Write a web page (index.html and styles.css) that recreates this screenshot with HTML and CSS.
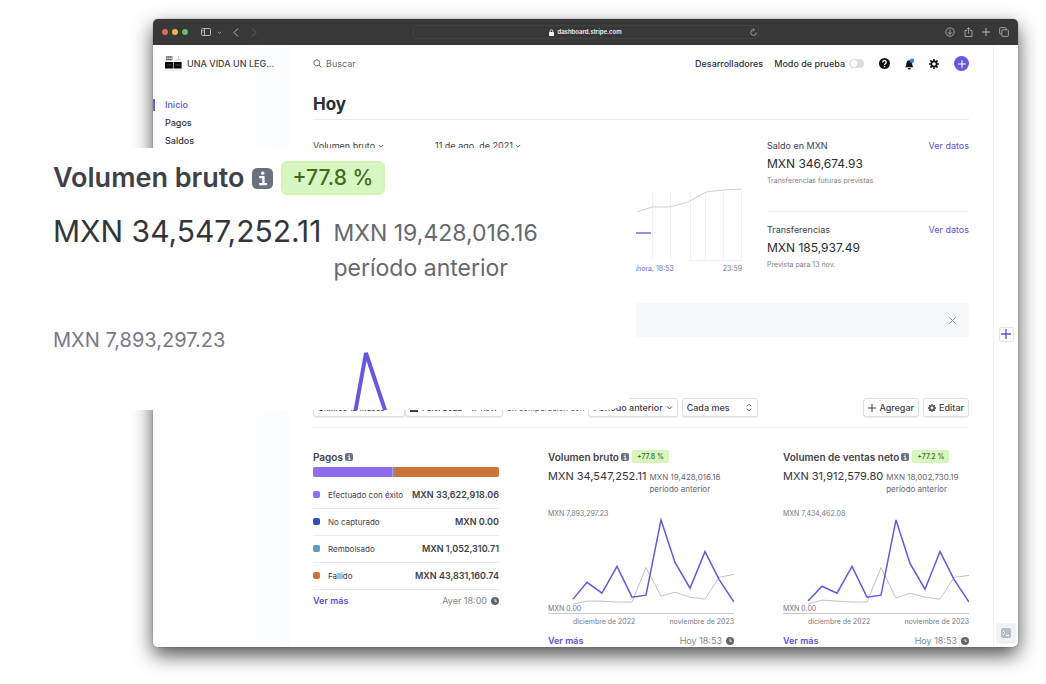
FILE: index.html
```html
<!DOCTYPE html>
<html lang="es">
<head>
    <meta charset="UTF-8">
    <meta name="viewport" content="width=device-width, initial-scale=1.0">
    <title>Inicio - Panel de pagos</title>
    <link rel="stylesheet" href="styles.css">
</head>
<body>
    <!-- shared icons -->
    <svg class="defs" width="0" height="0">
        <symbol id="info" viewBox="0 0 16 16">
            <rect width="16" height="16" rx="4" fill="currentColor"/>
            <path d="M5.500 7h3.200v5.500M5.500 12.300h6" fill="none" stroke="#fff" stroke-width="1.800"/>
            <circle cx="8.200" cy="4" r="1.300" fill="#fff"/>
        </symbol>
        <symbol id="down" viewBox="0 0 10 10">
            <path d="M1.500 3.500L5 7l3.500-3.500" fill="none" stroke="currentColor" stroke-width="1.400"/>
        </symbol>
        <symbol id="updown" viewBox="0 0 10 14">
            <path d="M1.500 5L5 1.500 8.500 5M1.500 9L5 12.500 8.500 9" fill="none" stroke="currentColor" stroke-width="1.500"/>
        </symbol>
        <symbol id="plus" viewBox="0 0 10 10">
            <path d="M5 0v10M0 5h10" fill="none" stroke="currentColor" stroke-width="1.300"/>
        </symbol>
        <symbol id="clock" viewBox="0 0 16 16">
            <circle cx="8" cy="8" r="8" fill="currentColor"/>
            <path d="M8 3.500V8.500h4" fill="none" stroke="#fff" stroke-width="1.800"/>
        </symbol>
        <symbol id="gear" viewBox="0 0 16 16">
            <circle cx="8" cy="8" r="4.300" fill="none" stroke="currentColor" stroke-width="2.800"/>
            <path d="M8 0v3M8 13v3M0 8h3M13 8h3M2.300 2.300l2.200 2.200M11.500 11.500l2.200 2.200M13.700 2.300l-2.200 2.200M4.500 11.500l-2.200 2.200" stroke="currentColor" stroke-width="2.600"/>
        </symbol>
    </svg>

    <div class="window">
        <header class="chrome">
            <div class="chrome-left">
                <i class="dot red"></i><i class="dot yellow"></i><i class="dot green"></i>
                <svg class="side-icon" width="10" height="8" viewBox="0 0 10 8" fill="none" stroke="currentColor"><rect x=".5" y=".5" width="9" height="7" rx="1"/><path d="M3.500 .5v7M1.500 2.500h1M1.500 4h1"/></svg>
                <svg class="small-down" width="5" height="5"><use href="#down"/></svg>
                <svg class="back" width="6" height="9" viewBox="0 0 6 9" fill="none" stroke="currentColor"><path d="M5 .5L1 4.500l4 4"/></svg>
                <svg class="forward" width="6" height="9" viewBox="0 0 6 9" fill="none" stroke="currentColor"><path d="M1 .5l4 4-4 4"/></svg>
            </div>
            <div class="address">
                <span></span>
                <span class="host"><svg width="5" height="7" viewBox="0 0 5 7"><path d="M1.200 3V2a1.300 1.300 0 0 1 2.600 0v1" fill="none" stroke="currentColor" stroke-width=".8"/><rect y="3" width="5" height="4" rx=".7" fill="currentColor"/></svg>dashboard.stripe.com</span>
                <svg class="reload" width="7" height="8" viewBox="0 0 7 8" fill="none" stroke="currentColor" stroke-width=".8"><path d="M6.300 4.500A2.800 2.800 0 1 1 4 1.800M3 .4l1.400 1.400L3 3.200"/></svg>
            </div>
            <div class="chrome-right">
                <svg width="10" height="10" viewBox="0 0 10 10" fill="none" stroke="currentColor" stroke-width=".8"><circle cx="5" cy="5" r="4.200"/><path d="M5 2.300v5M3 5.300l2 2 2-2"/></svg>
                <svg width="9" height="10" viewBox="0 0 9 10" fill="none" stroke="currentColor" stroke-width=".8"><path d="M3 3.500H1v6h7v-6H6M4.500 6.500V.7M2.700 2.400L4.500.6l1.800 1.800"/></svg>
                <svg width="8" height="8"><use href="#plus"/></svg>
                <svg width="10" height="10" viewBox="0 0 10 10" fill="none" stroke="currentColor" stroke-width=".8"><rect x="2.800" y="2.800" width="6.600" height="6.600" rx="1"/><path d="M2.800 7H1.600a1 1 0 0 1-1-1V1.600a1 1 0 0 1 1-1H6a1 1 0 0 1 1 1v1.200"/></svg>
            </div>
        </header>

        <div class="app">
            <aside class="sidebar">
                <div class="account">
                    <svg width="17" height="15" viewBox="0 0 17 15">
                        <path d="M1 1h6.500M1 3.500h6.500" stroke="#444" stroke-width="1.600" stroke-dasharray="1.700 .3"/>
                        <path d="M1 2.200h6.500" stroke="#d9a0a0" stroke-width=".8"/>
                        <path d="M10 4.500l3.500-1h2M13.500 0v3.500" fill="none" stroke="#bbb" stroke-width=".8"/>
                        <path d="M0 6h8v6.500H0zM8.600 6h8v6.500h-8z" fill="#080808"/>
                        <path d="M1.500 9h5M10.500 9h5" stroke="#777" stroke-width=".5"/>
                        <path d="M0 14h17" stroke="#e4e4e4"/>
                    </svg>
                    <span>UNA VIDA UN LEG...</span>
                </div>
                <nav>
                    <a class="active" href="#">Inicio</a>
                    <a href="#">Pagos</a>
                    <a href="#">Saldos</a>
                </nav>
            </aside>

            <main>
                <div class="topbar">
                    <label class="search">
                        <svg width="9" height="9" viewBox="0 0 9 9" fill="none" stroke="currentColor"><circle cx="3.800" cy="3.800" r="3"/><path d="M6 6l2.500 2.500"/></svg>
                        <input type="search" placeholder="Buscar" aria-label="Buscar">
                    </label>
                    <a href="#">Desarrolladores</a>
                    <label class="test-mode">Modo de prueba <input type="checkbox"></label>
                    <button class="icon" aria-label="Ayuda"><svg width="11" height="11" viewBox="0 0 16 16"><circle cx="8" cy="8" r="8" fill="#111"/><path d="M5.500 6.300A2.500 2.500 0 1 1 9 8.400c-.8.400-1 .700-1 1.600" fill="none" stroke="#fff" stroke-width="1.900"/><circle cx="8" cy="12.400" r="1.200" fill="#fff"/></svg></button>
                    <button class="icon" aria-label="Notificaciones"><svg width="11" height="12" viewBox="0 0 11 12"><path d="M1 9.200c1.300-1 1.200-2.500 1.400-4A3 3 0 0 1 5 2.300c2 0 3 1.400 3.200 3 .1 1.500.1 3 1.300 3.900z" fill="#111"/><path d="M3.800 10h3a1.500 1.500 0 0 1-3 0z" fill="#111"/><circle cx="8" cy="2.800" r="2.300" fill="#3f7fe0"/></svg></button>
                    <button class="icon gear" aria-label="Configuración"><svg width="10" height="10"><use href="#gear"/></svg></button>
                    <button class="create" aria-label="Crear"><svg width="8" height="8"><use href="#plus"/></svg></button>
                </div>

                <h1>Hoy</h1>

                <section class="today">
                    <div class="today-chart">
                        <div class="pickers">
                            <button>Volumen bruto <svg width="6" height="6"><use href="#down"/></svg></button>
                            <button>11 de ago. de 2021 <svg width="6" height="6"><use href="#down"/></svg></button>
                        </div>
                        <svg class="plot" viewBox="0 0 429 80" preserveAspectRatio="none">
                            <path d="M339.500 8v68M357.500 8v68M377.500 8v68M392.500 8v68M410.500 8v68M428.500 8v68M375 76.500h54" stroke="#f1f1f3" fill="none"/>
                            <polyline points="324,28 339,23 357,23 375,18 393,8 410,6 429,5" stroke="#cfcfd2" fill="none"/>
                            <path d="M310 49h28" stroke="#766bea" stroke-width="1.500" fill="none"/>
                        </svg>
                        <div class="hours"><span class="now">Ahora, 18:53</span><span>23:59</span></div>
                    </div>
                    <div class="balances">
                        <div class="balance">
                            <div class="line"><span>Saldo en MXN</span><a href="#">Ver datos</a></div>
                            <div class="amount">MXN 346,674.93</div>
                            <small>Transferencias futuras previstas</small>
                        </div>
                        <div class="balance">
                            <div class="line"><span>Transferencias</span><a href="#">Ver datos</a></div>
                            <div class="amount">MXN 185,937.49</div>
                            <small>Prevista para 13 nov.</small>
                        </div>
                    </div>
                </section>

                <div class="banner">
                    <button aria-label="Cerrar"><svg width="7" height="7" viewBox="0 0 7 7"><path d="M.5.5l6 6M6.500.5l-6 6" stroke="currentColor"/></svg></button>
                </div>

                <div class="toolbar">
                    <div class="range">
                        <button class="btn">Últimos 12 meses <svg width="7" height="7"><use href="#down"/></svg></button>
                        <button class="btn"><svg width="8" height="8" viewBox="0 0 8 8"><path d="M0 1h8v7H0z" fill="currentColor"/></svg> 1 dic. 2022 - 17 nov.</button>
                    </div>
                    <span class="compare">en comparación con</span>
                    <button class="btn">Período anterior <svg width="7" height="7"><use href="#down"/></svg></button>
                    <div class="select">
                        <select class="btn" aria-label="Intervalo"><option>Cada mes</option></select>
                        <svg width="6" height="9"><use href="#updown"/></svg>
                    </div>
                    <button class="btn add"><svg width="8" height="8"><use href="#plus"/></svg> Agregar</button>
                    <button class="btn"><svg width="8" height="8"><use href="#gear"/></svg> Editar</button>
                </div>

                <section class="widgets">
                    <article>
                        <h2>Pagos <svg class="info" width="8" height="8"><use href="#info"/></svg></h2>
                        <div class="stack"><i class="violet"></i><i class="sky"></i><i class="orange"></i></div>
                        <table>
                            <tr><td><i class="key violet"></i>Efectuado con éxito</td><td>MXN 33,622,918.06</td></tr>
                            <tr><td><i class="key navy"></i>No capturado</td><td>MXN 0.00</td></tr>
                            <tr><td><i class="key sky"></i>Rembolsado</td><td>MXN 1,052,310.71</td></tr>
                            <tr><td><i class="key orange"></i>Fallido</td><td>MXN 43,831,160.74</td></tr>
                        </table>
                        <footer><a href="#">Ver más</a><span>Ayer 18:00 <svg width="8" height="8"><use href="#clock"/></svg></span></footer>
                    </article>

                    <article>
                        <h2>Volumen bruto <svg class="info" width="8" height="8"><use href="#info"/></svg><span class="badge">+77.8 %</span></h2>
                        <div class="totals"><strong>MXN 34,547,252.11</strong><span>MXN 19,428,016.16<br>período anterior</span></div>
                        <div class="chart">
                            <svg viewBox="0 0 186 104" preserveAspectRatio="none">
                                <polyline class="previous" points="25,95 39,92 54,92 69,93 84,93 98,58 113,87 127,83 142,88 157,90 171,68 186,65"/>
                                <polyline class="current" points="25,90 39,73 54,84 69,57 84,88 98,86 113,10 127,53 142,79 157,42 171,70 186,93"/>
                            </svg>
                            <span class="max">MXN 7,893,297.23</span>
                            <span class="min">MXN 0.00</span>
                        </div>
                        <div class="dates"><span>diciembre de 2022</span><span>noviembre de 2023</span></div>
                        <footer><a href="#">Ver más</a><span>Hoy 18:53 <svg width="8" height="8"><use href="#clock"/></svg></span></footer>
                    </article>

                    <article>
                        <h2>Volumen de ventas neto <svg class="info" width="8" height="8"><use href="#info"/></svg><span class="badge">+77.2 %</span></h2>
                        <div class="totals"><strong>MXN 31,912,579.80</strong><span>MXN 18,002,730.19<br>período anterior</span></div>
                        <div class="chart">
                            <svg viewBox="0 0 186 104" preserveAspectRatio="none">
                                <polyline class="previous" points="25,95 39,91 54,92 69,93 84,93 98,58 113,89 127,84 142,88 157,90 171,68 186,66"/>
                                <polyline class="current" points="25,92 39,77 54,84 69,57 84,88 98,86 113,10 127,54 142,80 157,42 171,70 186,93"/>
                            </svg>
                            <span class="max">MXN 7,434,462.08</span>
                            <span class="min">MXN 0.00</span>
                        </div>
                        <div class="dates"><span>diciembre de 2022</span><span>noviembre de 2023</span></div>
                        <footer><a href="#">Ver más</a><span>Hoy 18:53 <svg width="8" height="8"><use href="#clock"/></svg></span></footer>
                    </article>
                </section>
            </main>

            <aside class="rail">
                <button class="rail-add" aria-label="Abrir aplicación"><svg width="10" height="10"><use href="#plus"/></svg></button>
                <button class="rail-shell" aria-label="Consola"><svg width="10" height="10" viewBox="0 0 10 10"><rect width="10" height="10" rx="2" fill="#b9bdc4"/><path d="M2 3l2 2-2 2M5 7.500h3" fill="none" stroke="#fff"/></svg></button>
            </aside>
        </div>
    </div>

    <!-- enlarged widget over the window -->
    <section class="callout">
        <h2>Volumen bruto <svg class="info" width="21" height="21"><use href="#info"/></svg><span class="badge">+77.8 %</span></h2>
        <div class="totals"><strong>MXN 34,547,252.11</strong><span>MXN 19,428,016.16<br>período anterior</span></div>
        <div class="max">MXN 7,893,297.23</div>
        <svg class="peak" width="36" height="60" viewBox="0 0 36 60"><polyline points="3,62 14,2 34,62" fill="none" stroke="#625bdf" stroke-width="4"/></svg>
    </section>
</body>
</html>
```

FILE: styles.css
```css
*{
    box-sizing: border-box;
}
body{
    margin: 0;
    min-height: 100vh;
    position: relative;
    overflow: hidden;
    background: #fff;
    color: #404148;
    font-family: Inter, "Liberation Sans", sans-serif;
    font-size: 9px;
    line-height: 12px;
}
button, input, select{
    font: inherit;
    color: inherit;
    margin: 0;
    padding: 0;
    border: 0;
    background: none;
}
a{
    color: #5a4fe0;
    text-decoration: none;
}
svg{
    flex: none;
}
.defs{
    position: absolute;
}
h1, h2{
    margin: 0;
}

/* browser window */
.window{
    margin: 19px 28px 38px 153px;
    border-radius: 5px;
    overflow: hidden;
    background: #fff;
    box-shadow: 0 0 1px #444, 0 8px 20px rgba(0,0,0,.7);
}
.chrome{
    height: 26px;
    padding: 0 9px;
    display: grid;
    grid-template-columns: 1fr 346px 1fr;
    align-items: center;
    background: #383838;
    color: #b8b8b8;
}
.chrome-left, .chrome-right{
    display: flex;
    align-items: center;
}
.chrome-right{
    justify-content: flex-end;
    gap: 9px;
}
.dot{
    width: 6px;
    height: 6px;
    margin-right: 4px;
    border-radius: 50%;
}
.dot.red{
    background: #e0695f;
}
.dot.yellow{
    background: #e5b94f;
}
.dot.green{
    background: #6dbb55;
}
.side-icon{
    margin-left: 9px;
}
.small-down{
    margin: 0 11px 0 6px;
}
.forward{
    margin-left: 12px;
    color: #606060;
}
.address{
    height: 14px;
    padding: 0 1px;
    display: grid;
    grid-template-columns: 1fr auto 1fr;
    align-items: center;
    border: 1px solid #424242;
    border-radius: 3px;
}
.host{
    display: flex;
    align-items: center;
    gap: 3px;
    color: #f2f2f2;
    font-size: 6px;
    font-weight: 600;
}
.reload{
    justify-self: end;
}

/* page inside the window */
.app{
    display: grid;
    grid-template-columns: 136px 1fr 25px;
}
.sidebar{
    background: linear-gradient(to right, #fff 60%, #fafcfe);
}
.account{
    height: 37px;
    padding-left: 12px;
    display: flex;
    align-items: center;
    gap: 5px;
    font-weight: 500;
    white-space: nowrap;
}
nav{
    padding-top: 17px;
}
nav a{
    display: block;
    margin-bottom: 6px;
    padding-left: 12px;
    color: #30313d;
    font-weight: 500;
}
nav a.active{
    color: #5a4fe0;
    box-shadow: inset 2px 0 #6a5fe4;
}
main{
    padding: 0 24px;
}
.topbar{
    height: 37px;
    display: flex;
    align-items: center;
    color: #30313d;
    font-weight: 500;
}
.topbar > a{
    color: inherit;
    margin-right: 11px;
}
.search{
    flex: 1;
    display: flex;
    align-items: center;
    gap: 4px;
    color: #6a6c72;
    font-weight: 400;
}
.search input{
    width: 120px;
    outline: 0;
}
.search input::placeholder{
    color: #6a6c72;
}
.test-mode{
    display: flex;
    align-items: center;
    gap: 4px;
    margin-right: 15px;
}
.test-mode input{
    appearance: none;
    width: 15px;
    height: 9px;
    border-radius: 5px;
    background: radial-gradient(circle at 5px 50%, #fff 3px, transparent 4px), #dcdcdf;
}
.icon{
    height: 12px;
    margin-right: 14px;
    display: flex;
    align-items: center;
    color: #111;
}
.gear{
    margin-right: 15px;
}
.create{
    width: 15px;
    height: 15px;
    display: grid;
    place-items: center;
    border-radius: 50%;
    background: #625bdf;
    color: #fff;
}
h1{
    height: 38px;
    padding-top: 12px;
    border-bottom: 1px solid #e9eaee;
    color: #2a2b33;
    font-size: 17px;
    line-height: 20px;
    font-weight: 700;
}
.today{
    padding-top: 20px;
    display: grid;
    grid-template-columns: 1fr 202px;
    gap: 25px;
}
.pickers{
    display: grid;
    grid-template-columns: 122px 1fr;
    justify-items: start;
}
.plot{
    display: block;
    width: 100%;
    height: 80px;
    margin-top: 32px;
}
.hours{
    display: flex;
    justify-content: flex-end;
    gap: 49px;
    font-size: 7px;
    line-height: 10px;
    color: #77797f;
}
.hours .now{
    color: #7468e6;
}
.balance{
    height: 71px;
}
.balance + .balance{
    padding-top: 12px;
    border-top: 1px solid #f1f1f4;
}
.line{
    display: flex;
    justify-content: space-between;
}
.amount{
    margin: 4px 0;
    color: #2a2b33;
    font-size: 12px;
    line-height: 15px;
}
small{
    display: block;
    color: #7d8088;
    font-size: 7px;
}
.banner{
    height: 34px;
    margin-top: 21px;
    padding-right: 13px;
    display: flex;
    justify-content: flex-end;
    align-items: center;
    border-radius: 4px;
    background: #f6f8fa;
    color: #85878d;
}
.banner button{
    display: flex;
}

/* report controls */
.toolbar{
    margin-top: 61px;
    padding-bottom: 10px;
    display: flex;
    align-items: center;
    gap: 4px;
    border-bottom: 1px solid #eeeef1;
}
.btn{
    height: 19px;
    padding: 0 4px;
    display: flex;
    align-items: center;
    gap: 3px;
    border: 1px solid #dfe0e4;
    border-radius: 3px;
    background: #fff;
    box-shadow: 0 1px 1px rgba(0,0,0,.08);
    font-weight: 500;
    white-space: nowrap;
}
.range{
    display: grid;
    grid-template-columns: 92px 98px;
}
.range .btn{
    font-size: 8px;
}
.compare{
    font-size: 8px;
}
.select{
    position: relative;
}
.select select{
    appearance: none;
    width: 76px;
}
.select svg{
    position: absolute;
    right: 6px;
    top: 5px;
    pointer-events: none;
}
.add{
    margin-left: auto;
}

/* widgets */
.widgets{
    padding-top: 22px;
    display: grid;
    grid-template-columns: repeat(3, 1fr);
    gap: 49px;
}
h2{
    height: 13px;
    display: flex;
    align-items: center;
    gap: 2px;
    font-size: 10px;
    font-weight: 600;
    white-space: nowrap;
}
.info{
    color: #6b7080;
}
.badge{
    margin-left: 1px;
    padding: 0 4px;
    border: 1px solid #d3f5b4;
    border-radius: 2px;
    background: #d7f7c2;
    color: #43691b;
    font-size: 7px;
    line-height: 11px;
    font-weight: 500;
}
.stack{
    height: 10px;
    margin-top: 4px;
    display: grid;
    grid-template-columns: 79fr 3fr 103fr;
    border-radius: 2px;
    overflow: hidden;
}
.violet{
    background: #8d6df0;
}
.navy{
    background: #2f50b5;
}
.sky{
    background: #5d9cbe;
}
.orange{
    background: #cb7438;
}
.stack .sky{
    border-right: 1px solid #b08a70;
    border-left: 1px solid #a5a0d8;
}
table{
    width: 100%;
    margin-top: 4px;
    border-collapse: collapse;
    white-space: nowrap;
}
td{
    height: 27px;
    padding: 1px 0 0;
    border-bottom: 1px solid #e9eaee;
    font-size: 8px;
}
td:last-child{
    text-align: right;
    font-size: 9px;
    font-weight: 600;
}
.key{
    display: inline-block;
    width: 7px;
    height: 7px;
    margin-right: 8px;
    border-radius: 2px;
}
footer{
    display: flex;
    justify-content: space-between;
    margin-top: 5px;
    color: #85878d;
}
footer a{
    font-weight: 600;
}
footer span{
    display: flex;
    align-items: center;
    gap: 4px;
}
footer svg{
    color: #62646f;
}
.totals{
    margin-top: 7px;
    display: flex;
    gap: 3px;
    white-space: nowrap;
}
.totals strong{
    color: #34353b;
    font-size: 11px;
    font-weight: 400;
}
.totals span{
    padding-top: 1px;
    color: #66686e;
    font-size: 8px;
}
.chart{
    margin-top: 15px;
    display: grid;
    border-bottom: 1px solid #c9cacf;
    color: #77797f;
    font-size: 7px;
    line-height: 8px;
}
.chart > *{
    grid-area: 1 / 1;
}
.chart svg{
    width: 100%;
    height: 103px;
}
.chart .min{
    align-self: end;
}
.chart polyline{
    fill: none;
}
.previous{
    stroke: #c0c1c6;
}
.current{
    stroke: #625bdf;
    stroke-width: 1.5;
}
.dates{
    padding: 2px 0 2px 25px;
    display: flex;
    justify-content: space-between;
    font-size: 7px;
    color: #77797f;
}

/* right rail */
.rail{
    padding-bottom: 5px;
    display: flex;
    flex-direction: column;
    align-items: center;
    border-left: 1px solid #f1f1f4;
}
.rail-add{
    width: 15px;
    height: 15px;
    margin: auto 0;
    display: grid;
    place-items: center;
    border: 1px solid #e3e4ea;
    border-radius: 2px;
    color: #5a4fe0;
}
.rail-shell{
    width: 19px;
    height: 19px;
    display: grid;
    place-items: center;
    border-radius: 2px;
    background: #f1f2f5;
    box-shadow: 0 1px 2px rgba(0,0,0,.1);
}

/* enlarged widget */
.callout{
    position: absolute;
    top: 148px;
    left: 0;
    width: 636px;
    height: 262px;
    padding: 13px 0 0 53px;
    overflow: hidden;
    border-radius: 0 0 30px 0;
    background: #fff;
}
.callout h2{
    height: 34px;
    gap: 7px;
    font-size: 27px;
}
.callout .badge{
    padding: 0 10px;
    border-width: 2px;
    border-radius: 6px;
    font-size: 21px;
    line-height: 30px;
}
.callout .totals{
    margin-top: 19px;
    gap: 12px;
}
.callout .totals strong{
    font-size: 30px;
    line-height: 34px;
}
.callout .totals span{
    padding-top: 2px;
    font-size: 23px;
    line-height: 35px;
}
.callout .max{
    margin-top: 43px;
    color: #77798a;
    font-size: 20px;
    line-height: 22px;
}
.peak{
    display: block;
    margin-left: 299px;
}
```
